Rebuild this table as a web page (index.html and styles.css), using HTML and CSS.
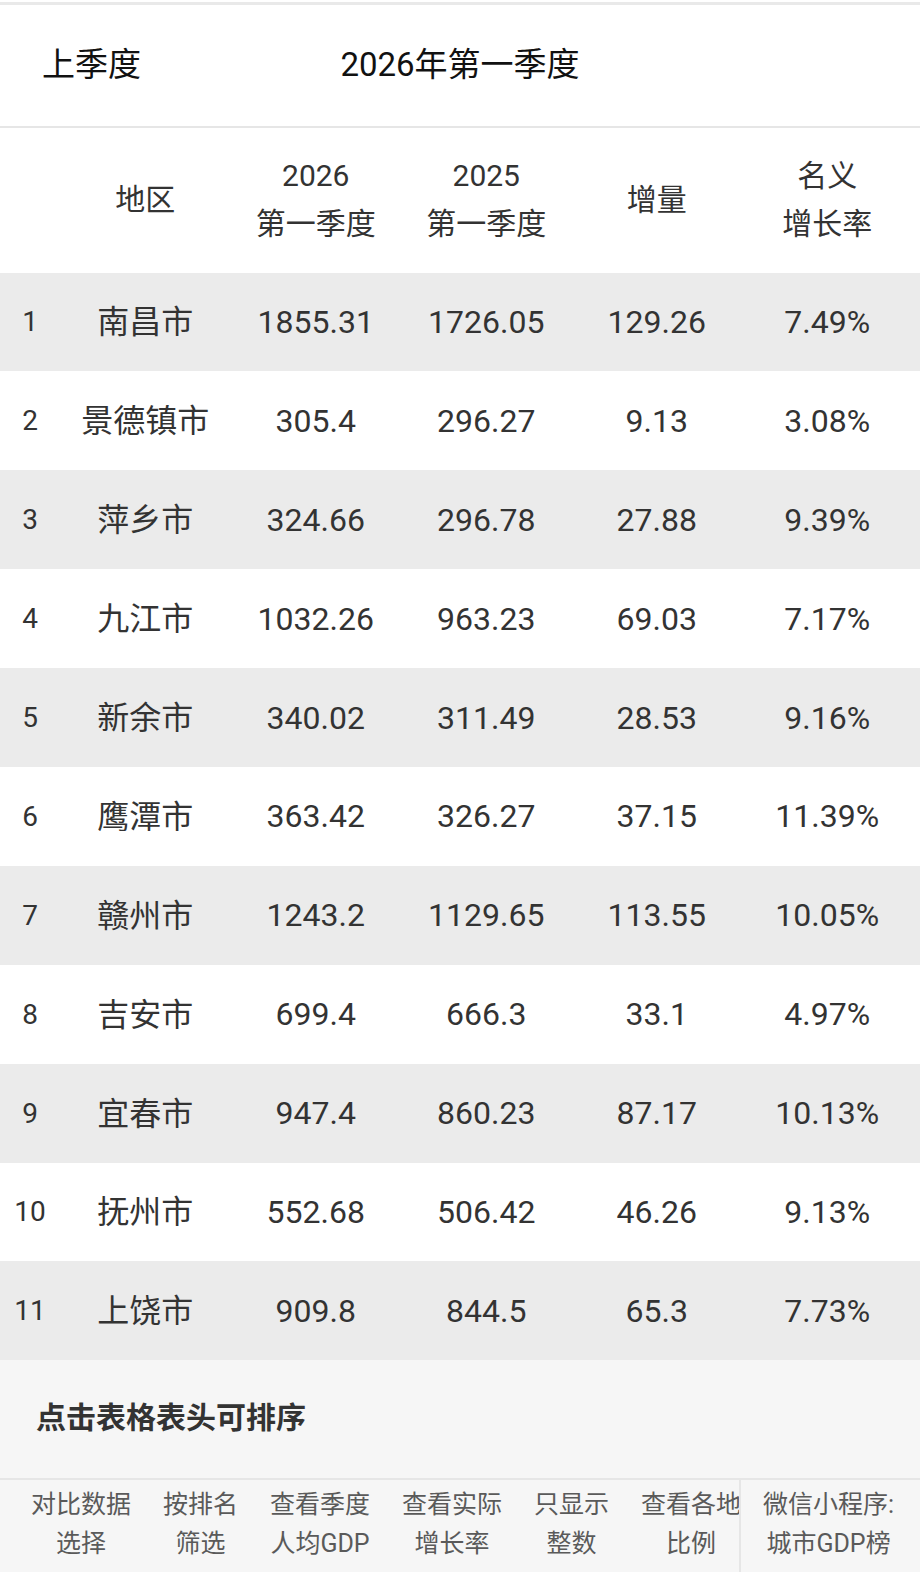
FILE: index.html
```html
<!DOCTYPE html>
<html lang="zh-CN">
<head>
<meta charset="utf-8">
<title>2026年第一季度 江西各市GDP</title>
<link rel="stylesheet" href="styles.css">
</head>
<body>
<div class="page">
  <header class="period-bar">
    <span class="prev">上季度</span>
    <span class="period-title">2026年第一季度</span>
    <span class="spacer"></span>
  </header>

  <div class="table">
    <div class="row head">
      <div class="cell"></div>
      <div class="cell">地区</div>
      <div class="cell">2026<br>第一季度</div>
      <div class="cell">2025<br>第一季度</div>
      <div class="cell">增量</div>
      <div class="cell">名义<br>增长率</div>
    </div>
    <div class="row odd"><div class="cell rank">1</div><div class="cell city">南昌市</div><div class="cell">1855.31</div><div class="cell">1726.05</div><div class="cell">129.26</div><div class="cell">7.49%</div></div>
    <div class="row"><div class="cell rank">2</div><div class="cell city">景德镇市</div><div class="cell">305.4</div><div class="cell">296.27</div><div class="cell">9.13</div><div class="cell">3.08%</div></div>
    <div class="row odd"><div class="cell rank">3</div><div class="cell city">萍乡市</div><div class="cell">324.66</div><div class="cell">296.78</div><div class="cell">27.88</div><div class="cell">9.39%</div></div>
    <div class="row"><div class="cell rank">4</div><div class="cell city">九江市</div><div class="cell">1032.26</div><div class="cell">963.23</div><div class="cell">69.03</div><div class="cell">7.17%</div></div>
    <div class="row odd"><div class="cell rank">5</div><div class="cell city">新余市</div><div class="cell">340.02</div><div class="cell">311.49</div><div class="cell">28.53</div><div class="cell">9.16%</div></div>
    <div class="row"><div class="cell rank">6</div><div class="cell city">鹰潭市</div><div class="cell">363.42</div><div class="cell">326.27</div><div class="cell">37.15</div><div class="cell">11.39%</div></div>
    <div class="row odd"><div class="cell rank">7</div><div class="cell city">赣州市</div><div class="cell">1243.2</div><div class="cell">1129.65</div><div class="cell">113.55</div><div class="cell">10.05%</div></div>
    <div class="row"><div class="cell rank">8</div><div class="cell city">吉安市</div><div class="cell">699.4</div><div class="cell">666.3</div><div class="cell">33.1</div><div class="cell">4.97%</div></div>
    <div class="row odd"><div class="cell rank">9</div><div class="cell city">宜春市</div><div class="cell">947.4</div><div class="cell">860.23</div><div class="cell">87.17</div><div class="cell">10.13%</div></div>
    <div class="row"><div class="cell rank">10</div><div class="cell city">抚州市</div><div class="cell">552.68</div><div class="cell">506.42</div><div class="cell">46.26</div><div class="cell">9.13%</div></div>
    <div class="row odd"><div class="cell rank">11</div><div class="cell city">上饶市</div><div class="cell">909.8</div><div class="cell">844.5</div><div class="cell">65.3</div><div class="cell">7.73%</div></div>
  </div>

  <section class="footer">
    <p class="hint">点击表格表头可排序</p>
    <nav class="actions">
      <div class="scroll">
        <div class="btn">对比数据<br>选择</div>
        <div class="btn">按排名<br>筛选</div>
        <div class="btn">查看季度<br>人均GDP</div>
        <div class="btn">查看实际<br>增长率</div>
        <div class="btn">只显示<br>整数</div>
        <div class="btn">查看各地<br>比例</div>
      </div>
      <div class="btn fixed">微信小程序:<br>城市GDP榜</div>
    </nav>
  </section>
</div>
</body>
</html>
```

FILE: styles.css
```css
html, body {
  margin: 0;
  padding: 0;
  background: #ffffff;
}

body {
  font-family: "Roboto", "Noto Sans CJK SC", sans-serif;
  color: #333333;
  width: 920px;
  height: 1572px;
  overflow: hidden;
}

.page {
  padding-top: 2px;
}

.period-bar {
  border-top: 3px solid #e9e9e9;
  border-bottom: 2px solid #e6e6e6;
  height: 121px;
  box-sizing: content-box;
  display: grid;
  grid-template-columns: 1fr auto 1fr;
  align-items: center;
  padding-bottom: 0;
  font-size: 33px;
  color: #111111;
}

.prev,
.period-title {
  padding-bottom: 8px;
}

.prev {
  padding-left: 42px;
}

.table {
  display: flex;
  flex-direction: column;
}

.row {
  display: grid;
  grid-template-columns: 60px repeat(5, 170.5px);
  height: 98.9px;
  align-items: center;
  font-size: 32px;
}

.row.head {
  height: 144.5px;
  font-size: 30px;
  line-height: 48px;
  color: #333333;
}

.row.odd {
  background: #ebebeb;
}

.cell {
  text-align: center;
  white-space: nowrap;
}

.cell.city {
  padding-bottom: 5px;
}

.cell.rank {
  font-size: 28px;
}

.footer {
  background: #f6f6f6;
  height: 212px;
}

.hint {
  margin: 0;
  padding: 41px 0 43px 36px;
  line-height: 34px;
  font-size: 30px;
  font-weight: bold;
  color: #333333;
}

.actions {
  border-top: 2px solid #e6e6e6;
  display: flex;
  height: 92px;
  font-size: 25px;
  line-height: 39px;
  color: #5a5a5a;
}

.scroll {
  width: 739px;
  flex: none;
  display: flex;
  overflow: hidden;
  padding-left: 15px;
  box-sizing: border-box;
}

.btn {
  flex: none;
  padding: 5px 16px 0;
  text-align: center;
  white-space: nowrap;
}

.btn.fixed {
  border-left: 2px solid #e6e6e6;
  padding-left: 22px;
}
```
